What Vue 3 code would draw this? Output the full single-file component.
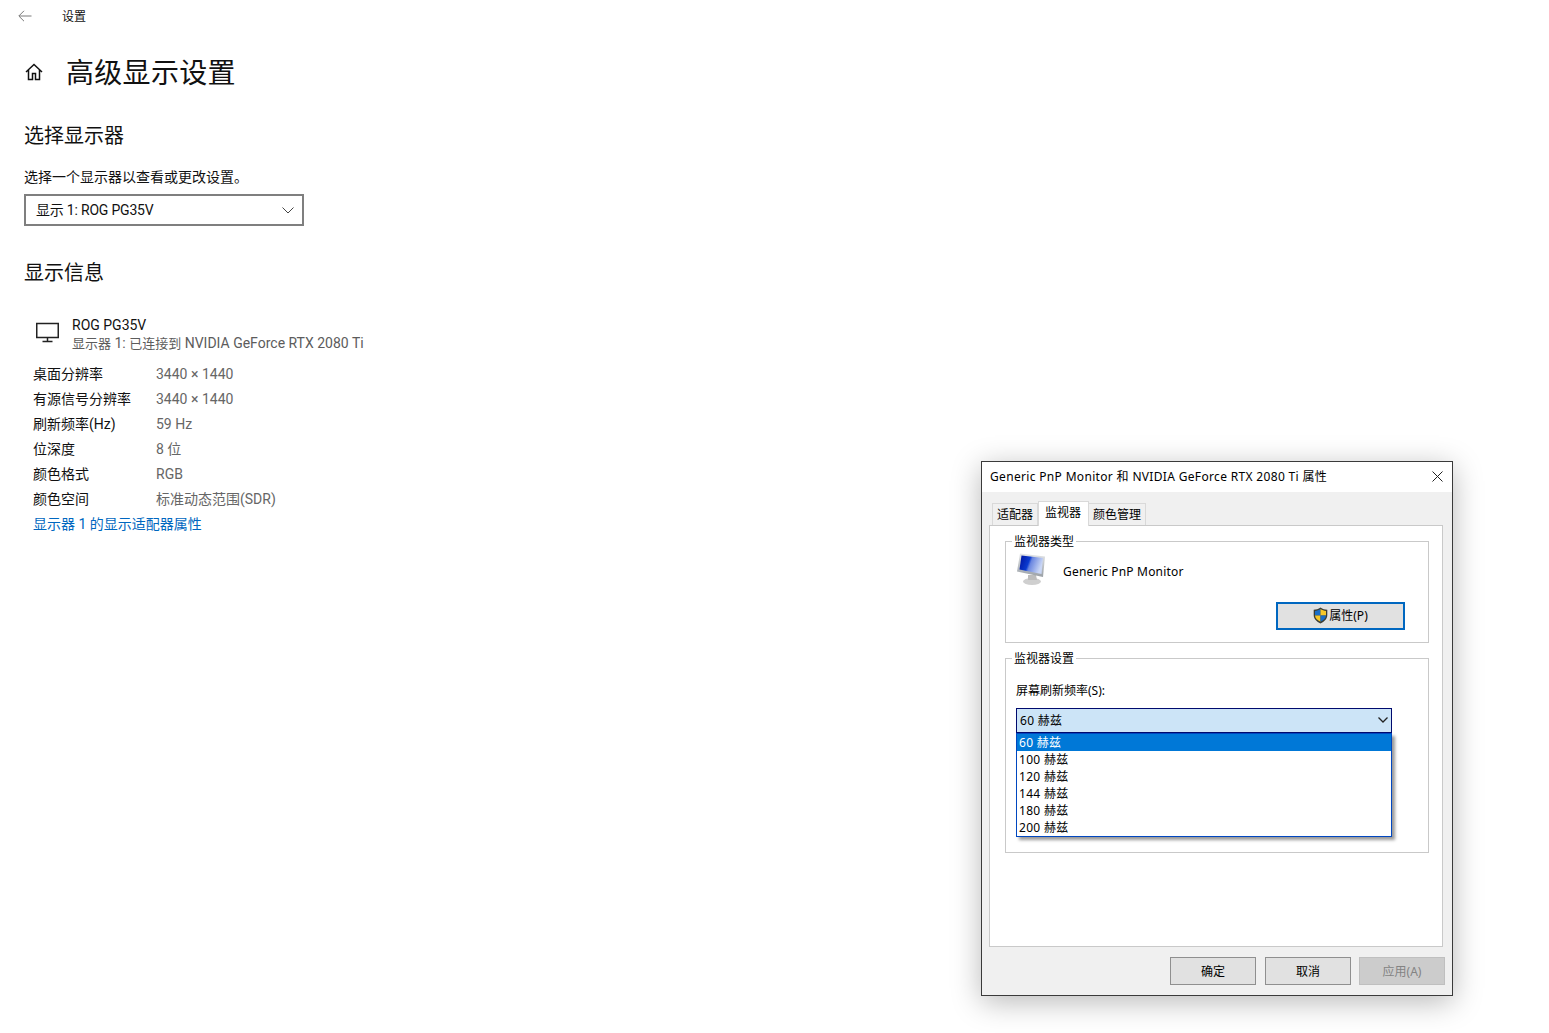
<script setup>
const rows = [
  ['桌面分辨率', '3440 × 1440'],
  ['有源信号分辨率', '3440 × 1440'],
  ['刷新频率(Hz)', '59 Hz'],
  ['位深度', '8 位'],
  ['颜色格式', 'RGB'],
  ['颜色空间', '标准动态范围(SDR)'],
]
const rates = ['60 赫兹', '100 赫兹', '120 赫兹', '144 赫兹', '180 赫兹', '200 赫兹']
</script>

<template>
  <div class="page">
    <header class="topbar">
      <svg class="back" width="14" height="12" viewBox="0 0 14 12" fill="none" stroke="#7a7a7a" stroke-width="1">
        <path d="M13.5 6H1M6 .8 .8 6 6 11.2" />
      </svg>
      <span class="topbar-title">设置</span>
    </header>

    <div class="title-row">
      <svg class="home" width="20" height="20" viewBox="0 0 20 20" fill="none" stroke="#111" stroke-width="1.5">
        <path d="M2 10 10 2.5 18 10M4.5 8v9.5h4v-6h3v6h4V8" />
      </svg>
      <h1>高级显示设置</h1>
    </div>

    <h2 class="section-a">选择显示器</h2>
    <p class="hint">选择一个显示器以查看或更改设置。</p>
    <div class="select">
      <span class="select-text">显示 1: ROG PG35V</span>
      <svg width="12" height="7" viewBox="0 0 12 7" fill="none" stroke="#444" stroke-width="1">
        <path d="M.5 .5 6 6l5.500-5.500" />
      </svg>
    </div>

    <h2 class="section-b">显示信息</h2>
    <div class="monitor">
      <svg class="monitor-icon" width="23" height="21" viewBox="0 0 23 21" fill="none" stroke="#222" stroke-width="1.500">
        <path d="M.75 1.500h21.500v14H.75zM11.500 15.500v4M6.500 19.500h10" />
      </svg>
      <div>
        <div class="monitor-name">ROG PG35V</div>
        <div class="monitor-sub"><span class="cjk">显示器</span> 1: <span class="cjk">已连接到</span> NVIDIA GeForce RTX 2080 Ti</div>
      </div>
    </div>

    <dl class="info">
      <div v-for="r in rows" :key="r[0]" class="info-row">
        <dt>{{ r[0] }}</dt>
        <dd>{{ r[1] }}</dd>
      </div>
    </dl>
    <a class="link">显示器 1 的显示适配器属性</a>

    <section class="dialog">
      <div class="dlg-title">
        <span>Generic PnP Monitor 和 NVIDIA GeForce RTX 2080 Ti 属性</span>
        <svg width="11" height="11" viewBox="0 0 11 11" stroke="#222" stroke-width="1" fill="none">
          <path d="M.5 .5l10 10M10.500 .5l-10 10" />
        </svg>
      </div>
      <div class="dlg-body">
        <div class="tabs">
          <div class="tab">适配器</div>
          <div class="tab active">监视器</div>
          <div class="tab">颜色管理</div>
        </div>
        <div class="panel">
          <div class="group group-type">
            <span class="legend">监视器类型</span>
            <div class="type-row">
              <svg width="30" height="33" viewBox="0 0 30 33">
                <defs>
                  <linearGradient id="scr" x1="0" y1="0" x2="1" y2="0.3">
                    <stop offset="0" stop-color="#00109c" />
                    <stop offset="0.45" stop-color="#0a3bd0" />
                    <stop offset="0.55" stop-color="#6a86e0" />
                    <stop offset="1" stop-color="#c9d6f5" />
                  </linearGradient>
                  <linearGradient id="frm" x1="0" y1="0" x2="0" y2="1">
                    <stop offset="0" stop-color="#e4e6e8" />
                    <stop offset="1" stop-color="#9aa0a6" />
                  </linearGradient>
                </defs>
                <ellipse cx="15" cy="28.500" rx="9" ry="3.500" fill="#cfcfcf" />
                <path d="M11 22h8l1 5h-9z" fill="#bcbcbc" />
                <path d="M3 .5 28 3.500 26 24 0 18.500z" fill="url(#frm)" />
                <path d="M4.500 2.500 26 5 24.500 21 2.500 16.500z" fill="url(#scr)" />
              </svg>
              <span class="type-name">Generic PnP Monitor</span>
            </div>
            <div class="prop-row">
              <button class="prop-btn">
                <svg width="15" height="17" viewBox="0 0 15 17">
                  <path d="M7.500 .5C5.500 2 3 2.700 .7 2.800V8c0 4 3 6.700 6.800 8.500 3.800-1.800 6.800-4.500 6.800-8.500V2.800C12 2.700 9.500 2 7.500 .5z" fill="#3d3d33" />
                  <path d="M7.500 2C6 3.100 4 3.700 2 3.900V8.500h5.500z" fill="#1a6ec8" />
                  <path d="M7.500 2c1.500 1.100 3.500 1.700 5.500 1.900V8.500H7.500z" fill="#f8c828" />
                  <path d="M2 8.500h5.500v6.300C4.500 13.300 2.200 11.300 2 8.500z" fill="#f8c828" />
                  <path d="M13 8.500H7.500v6.300c3-1.500 5.300-3.500 5.500-6.300z" fill="#1a6ec8" />
                </svg>
                <span>属性(P)</span>
              </button>
            </div>
          </div>

          <div class="group group-set">
            <span class="legend">监视器设置</span>
            <div class="rate-label">屏幕刷新频率(S):</div>
            <div class="combo">
              <span>60 赫兹</span>
              <svg width="10" height="6" viewBox="0 0 10 6" fill="none" stroke="#222" stroke-width="1.300">
                <path d="M.5 .5 5 5l4.500-4.500" />
              </svg>
              <ul class="list">
                <li v-for="(r, i) in rates" :key="r" :class="{ sel: i === 0 }">{{ r }}</li>
              </ul>
            </div>
          </div>
        </div>
        <div class="actions">
          <button class="btn">确定</button>
          <button class="btn">取消</button>
          <button class="btn off">应用(A)</button>
        </div>
      </div>
    </section>
  </div>
</template>

<style scoped>
.page {
  position: relative;
  width: 1549px;
  height: 1033px;
  box-sizing: border-box;
  background: #fff;
  overflow: hidden;
  color: #111;
  font: 14px/20px Roboto, "Noto Sans CJK SC", sans-serif;
}
.topbar {
  display: flex;
  align-items: center;
  height: 32px;
  padding-left: 18px;
}
.back { margin-right: 30px; }
.topbar-title { font-size: 12px; position: relative; top: 1px; }
.title-row {
  display: flex;
  align-items: center;
  height: 40px;
  margin-top: 22px;
  padding-left: 24px;
}
.home { margin-right: 22px; margin-top: -4px; }
h1 {
  margin: 0;
  font-size: 28px;
  font-weight: 400;
  line-height: 40px;
  letter-spacing: .3px;
}
h2 {
  margin: 0 0 0 24px;
  font-size: 20px;
  font-weight: 400;
  line-height: 28px;
}
.section-a { margin-top: 28px; }
.hint { margin: 17px 0 0 24px; line-height: 20px; }
.select {
  display: flex;
  align-items: center;
  justify-content: space-between;
  width: 280px;
  height: 32px;
  box-sizing: border-box;
  margin: 7px 0 0 24px;
  padding: 0 8px 0 10px;
  border: 2px solid #7f7f7f;
}
.select-text { letter-spacing: -.2px; }
.section-b { margin-top: 33px; }
.monitor {
  display: flex;
  margin: 29px 0 0 36px;
  line-height: 18px;
}
.monitor-icon { margin: 6px 13px 0 0; }
.monitor-sub { color: #5c5c5c; }
.cjk { font-size: 13px; }
.info { margin: 8px 0 0 33px; }
.info-row { display: flex; height: 25px; align-items: center; }
dt { width: 123px; }
dd { margin: 0; color: #666; }
.link { display: block; margin: 1px 0 0 33px; line-height: 25px; color: #0067c0; }

.dialog {
  position: absolute;
  left: 981px;
  top: 461px;
  width: 472px;
  height: 535px;
  box-sizing: border-box;
  display: flex;
  flex-direction: column;
  border: 1px solid #3a3a3a;
  background: #f0f0f0;
  box-shadow: 0 6px 28px rgba(0, 0, 0, .28);
  font-family: "Noto Sans", "Noto Sans CJK SC", sans-serif;
  font-size: 12px;
  line-height: 17px;
  color: #000;
}
.dlg-title {
  display: flex;
  align-items: center;
  justify-content: space-between;
  height: 30px;
  padding: 0 9px 1px 8px;
  box-sizing: border-box;
  background: #fff;
  letter-spacing: .33px;
}
.dlg-body {
  flex: 1;
  display: flex;
  flex-direction: column;
  padding: 8px 9px 10px 7px;
  min-height: 0;
}
.tabs {
  display: flex;
  align-items: flex-end;
  height: 25px;
  padding-left: 3px;
}
.tab {
  height: 22px;
  box-sizing: border-box;
  padding: 2px 4px 0;
  border: 1px solid #d9d9d9;
  border-bottom: 0;
  border-left-width: 0;
  background: #f0f0f0;
}
.tab:first-child { border-left-width: 1px; }
.tab.active {
  position: relative;
  z-index: 1;
  height: 25px;
  margin-bottom: -1px;
  padding: 2px 7px 0 6px;
  background: #fff;
  border-left-width: 1px;
}
.panel {
  height: 423px;
  box-sizing: border-box;
  padding: 15px 13px 0 15px;
  border: 1px solid #c9c9c9;
  background: #fff;
}
.group {
  position: relative;
  box-sizing: border-box;
  border: 1px solid #c9c9c9;
}
.legend {
  position: absolute;
  left: 6px;
  top: -9px;
  padding: 0 2px;
  background: #fff;
}
.group-type { height: 102px; padding: 11px 23px 0 11px; }
.group-set { height: 195px; margin-top: 15px; padding: 23px 36px 0 10px; }
.type-row { display: flex; align-items: flex-start; height: 49px; }
.type-name { margin: 10px 0 0 16px; letter-spacing: .2px; }
.prop-row { display: flex; justify-content: flex-end; }
.prop-btn {
  display: flex;
  align-items: center;
  justify-content: center;
  width: 129px;
  height: 28px;
  padding: 0;
  border: 2px solid #0067c0;
  background: #e1e1e1;
  color: #000;
  font: inherit;
}
.prop-btn span { margin-left: 1px; }
.rate-label { height: 17px; }
.combo {
  position: relative;
  display: flex;
  align-items: center;
  justify-content: space-between;
  width: 376px;
  height: 25px;
  box-sizing: border-box;
  margin-top: 9px;
  padding: 0 3px 0 3px;
  border: 1px solid #000a6e;
  background: #cce4f7;
  letter-spacing: .3px;
}
.list {
  position: absolute;
  left: -1px;
  top: 24px;
  width: 376px;
  box-sizing: border-box;
  margin: 0;
  padding: 0;
  list-style: none;
  border: 1px solid #0047c0;
  background: #fff;
  box-shadow: 3px 3px 3px rgba(0, 0, 0, .4);
}
.list li { height: 17px; padding-left: 2px; }
.list li.sel { background: #0078d7; color: #fff; }
.actions {
  display: flex;
  justify-content: flex-end;
  gap: 9px;
  margin-top: 10px;
  margin-right: -2px;
}
.btn {
  width: 86px;
  height: 28px;
  padding: 0;
  border: 1px solid #8f8f8f;
  background: #e1e1e1;
  color: #000;
  font: inherit;
}
.btn.off {
  margin-left: -1px;
  border-color: #bfbfbf;
  background: #ccc;
  color: #838383;
}
</style>
